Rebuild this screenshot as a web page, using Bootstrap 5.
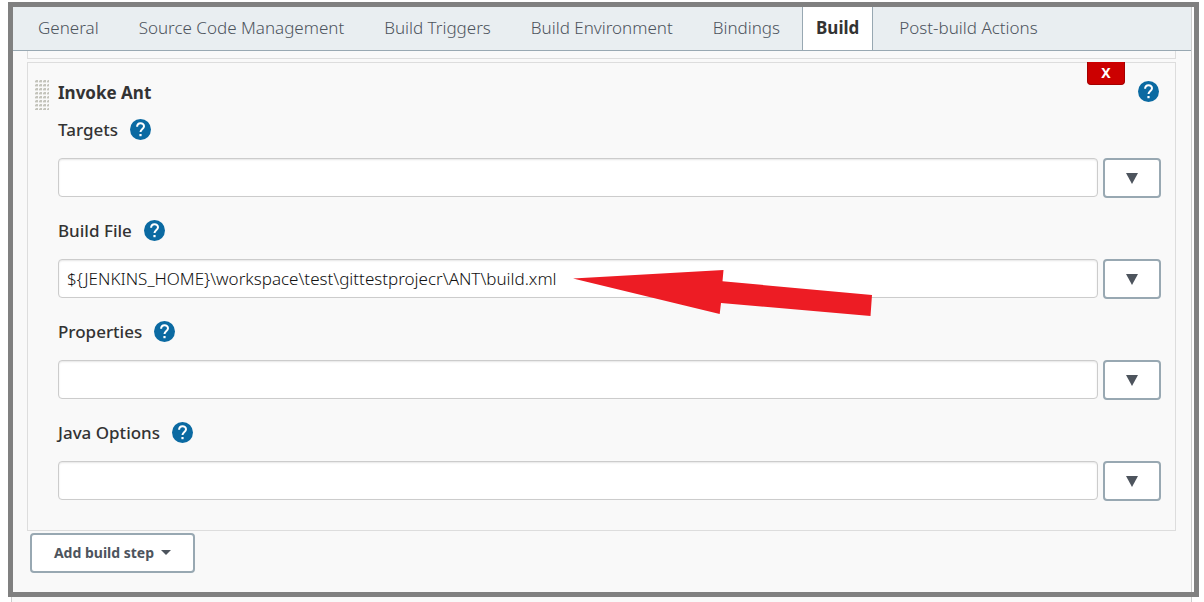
<!DOCTYPE html>
<html lang="en">
<head>
<meta charset="utf-8">
<meta name="viewport" content="width=device-width, initial-scale=1">
<title>Build configuration</title>
<link href="https://cdn.jsdelivr.net/npm/bootstrap@5.3.0/dist/css/bootstrap.min.css" rel="stylesheet">
<style>
  body { font-family: "Noto Sans", "Open Sans", sans-serif; font-size: 17px; line-height: 24px; color: #333; background: #fff; }
  .page-shell { padding: 2px 5px 0 8px; }
  .frame { border: 5px solid #808080; padding-right: 2px; }
  .config-pane { background: #f9f9f9; border-right: 1px solid #ccc; padding-bottom: 19px; }
  .after-frame { height: 5px; margin: 0 7px 0 3px; border: 1px solid #ccc; border-width: 0 1px; background: #f9f9f9; }
  .config-tabs { background: #e9eef1; border-bottom: 1px solid #98a8b2; height: 44px; padding-left: 5px; }
  .config-tabs .nav-link { padding: 0 20px; height: 43px; line-height: 42px; color: #4d545d; font-weight: 300; border-radius: 0; white-space: nowrap; }
  .config-tabs .nav-link.active { padding: 0 13px; margin: 0 6px 0 2px; background: #fff; color: #333; font-weight: 700; border: 1px solid #98a8b2; border-width: 0 1px; }
  .pane-body { padding: 0 15px 0 14px; }
  .step-tail { height: 8px; border: 1px solid #ddd; border-top: 0; }
  .build-step { margin-top: 3px; border: 1px solid #ddd; padding: 18px 14px 29px 30px; }
  .grip { left: 6px; top: 17px; }
  .remove-step { top: -1px; right: 50px; width: 38px; height: 23px; background: #c00; color: #fff; border: 1px solid #a40000; border-top: 0; border-radius: 0 0 4px 4px; font-size: 14px; line-height: 20px; font-weight: 700; }
  .help-btn { width: 21px; height: 21px; line-height: 0; }
  .step-head { height: 24px; padding-right: 2px; }
  .step-title { font-size: 17px; line-height: 24px; font-weight: 700; }
  .field-label { font-size: 17px; line-height: 24px; padding-top: 2px; font-weight: 500; }
  .label-row { height: 24px; gap: 12px; margin-bottom: 17px; }
  .field-block { margin-top: 20px; }
  .field-block.first-field { margin-top: 12px; }
  .entry-row { gap: 5px; }
  .field-input { height: 39px; padding: 4px 8px; border: 1px solid #ccc; border-radius: 4px; font-size: 17px; font-weight: 300; color: #111; box-shadow: inset 0 1px 2px rgba(0,0,0,.1); }
  .line-btn { height: 40px; background: #fff; border: 2px solid #98a8b2; border-radius: 4px; color: #4d545d; line-height: 24px; }
  .expand-btn { width: 58px; line-height: 20px; }
  .expand-btn svg { margin-bottom: 2px; }
  .add-step { margin: 2px 0 0 3px; width: 165px; font-size: 14px; font-weight: 700; }
  .add-step::after { margin-left: 7px; border-width: 5px 5px 0; vertical-align: 3px; }
  .pointer-arrow { left: 514px; top: 10px; }
</style>
</head>
<body>
<svg class="d-none" aria-hidden="true">
  <symbol id="help" viewBox="0 0 21 21"><circle cx="10.500" cy="10.500" r="10.500" fill="#0b6aa2"/><path d="M7.100 7.800C7.100 2.900 14 3.200 14 7.200c0 2.700-3.500 2.800-3.500 5.900" fill="none" stroke="#fff" stroke-width="2"/><rect x="9.400" y="15" width="2.200" height="2.200" fill="#fff"/></symbol>
  <symbol id="tri" viewBox="0 0 12 11"><path d="M0 0h12L6 11z" fill="#4d545d"/></symbol>
</svg>
<div class="page-shell">
  <div class="frame">
    <main class="config-pane">
      <nav class="nav config-tabs flex-nowrap" aria-label="Configuration sections">
        <a class="nav-link" href="#">General</a>
        <a class="nav-link" href="#">Source Code Management</a>
        <a class="nav-link" href="#">Build Triggers</a>
        <a class="nav-link" href="#">Build Environment</a>
        <a class="nav-link" href="#">Bindings</a>
        <a class="nav-link active" href="#" aria-current="page">Build</a>
        <a class="nav-link" href="#">Post-build Actions</a>
      </nav>
      <div class="pane-body">
        <div class="step-tail"></div>
        <section class="build-step position-relative">
          <svg class="grip position-absolute" width="15" height="30" aria-hidden="true">
            <defs><pattern id="dots" x="1" width="4" height="4" patternUnits="userSpaceOnUse"><rect width="3" height="3" fill="#e4e4e0"/><rect y="1" width="3" height="1" fill="#c4c4bc"/><rect x="1" width="2" height="2" fill="#c4c4bc"/></pattern></defs>
            <rect width="15" height="30" fill="url(#dots)"/>
          </svg>
          <button type="button" class="remove-step position-absolute p-0">X</button>
          <div class="step-head d-flex justify-content-between">
            <h1 class="step-title m-0">Invoke Ant</h1>
            <button type="button" class="help-btn border-0 bg-transparent p-0" aria-label="Help: Invoke Ant"><svg width="21" height="21"><use href="#help"/></svg></button>
          </div>
          <div class="field-block first-field">
            <div class="label-row d-flex align-items-center">
              <label class="field-label" for="targets">Targets</label>
              <button type="button" class="help-btn border-0 bg-transparent p-0" aria-label="Help: Targets"><svg width="21" height="21"><use href="#help"/></svg></button>
            </div>
            <div class="d-flex entry-row">
              <input id="targets" type="text" class="form-control field-input">
              <button type="button" class="line-btn expand-btn flex-shrink-0 p-0" aria-label="Expand Targets"><svg width="12" height="11"><use href="#tri"/></svg></button>
            </div>
          </div>
          <div class="field-block">
            <div class="label-row d-flex align-items-center">
              <label class="field-label" for="buildfile">Build File</label>
              <button type="button" class="help-btn border-0 bg-transparent p-0" aria-label="Help: Build File"><svg width="21" height="21"><use href="#help"/></svg></button>
            </div>
            <div class="d-flex entry-row position-relative">
              <input id="buildfile" type="text" class="form-control field-input" value="${JENKINS_HOME}\workspace\test\gittestprojecr\ANT\build.xml">
              <button type="button" class="line-btn expand-btn flex-shrink-0 p-0" aria-label="Expand Build File"><svg width="12" height="11"><use href="#tri"/></svg></button>
              <svg class="pointer-arrow position-absolute pe-none" width="300" height="48" aria-hidden="true"><path d="M1 9.500L151.500 1l-1 11.300L300 26l-1.500 21L149 34l-1.300 11z" fill="#ed1c24"/></svg>
            </div>
          </div>
          <div class="field-block">
            <div class="label-row d-flex align-items-center">
              <label class="field-label" for="properties">Properties</label>
              <button type="button" class="help-btn border-0 bg-transparent p-0" aria-label="Help: Properties"><svg width="21" height="21"><use href="#help"/></svg></button>
            </div>
            <div class="d-flex entry-row">
              <input id="properties" type="text" class="form-control field-input">
              <button type="button" class="line-btn expand-btn flex-shrink-0 p-0" aria-label="Expand Properties"><svg width="12" height="11"><use href="#tri"/></svg></button>
            </div>
          </div>
          <div class="field-block">
            <div class="label-row d-flex align-items-center">
              <label class="field-label" for="javaopts">Java Options</label>
              <button type="button" class="help-btn border-0 bg-transparent p-0" aria-label="Help: Java Options"><svg width="21" height="21"><use href="#help"/></svg></button>
            </div>
            <div class="d-flex entry-row">
              <input id="javaopts" type="text" class="form-control field-input">
              <button type="button" class="line-btn expand-btn flex-shrink-0 p-0" aria-label="Expand Java Options"><svg width="12" height="11"><use href="#tri"/></svg></button>
            </div>
          </div>
        </section>
        <button type="button" class="line-btn add-step dropdown-toggle p-0">Add build step</button>
      </div>
    </main>
  </div>
  <div class="after-frame"></div>
</div>
<script src="https://cdn.jsdelivr.net/npm/bootstrap@5.3.0/dist/js/bootstrap.bundle.min.js"></script>
</body>
</html>
